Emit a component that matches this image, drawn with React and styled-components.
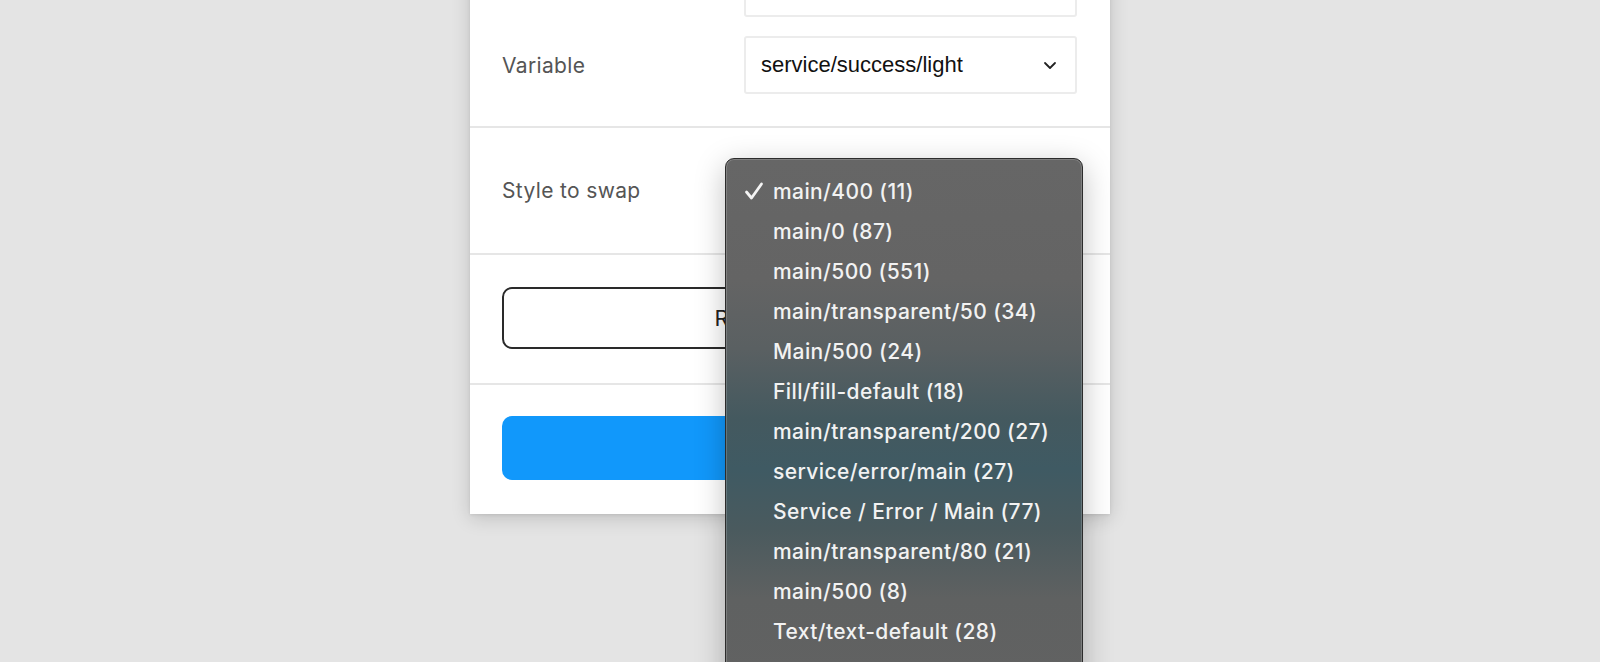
import styled, { createGlobalStyle } from 'styled-components';

const GlobalStyle = createGlobalStyle`
  html, body {
    margin: 0;
    padding: 0;
    background: #e4e4e4;
    overflow: hidden;
  }
  body {
    font-family: Inter, "Noto Sans", sans-serif;
  }
`;

const Page = styled.div`
  width: 1600px;
  height: 662px;
  overflow: hidden;
  display: flex;
  justify-content: flex-start;
  padding-left: 470px;
  box-sizing: border-box;
`;

const Panel = styled.div`
  width: 640px;
  margin-top: -73px;
  align-self: flex-start;
  background: #fff;
  box-shadow: 0 4px 18px rgba(0, 0, 0, 0.16), 0 1px 3px rgba(0, 0, 0, 0.08);
  display: flex;
  flex-direction: column;
`;

const Section = styled.div`
  padding: ${p => p.$pad || '33px 32px 34px'};
  display: flex;
  flex-direction: column;
  gap: 19px;
  border-top: ${p => (p.$first ? 'none' : '2px solid #e6e6e6')};
`;

const Row = styled.div`
  display: grid;
  grid-template-columns: 242px 333px;
  align-items: center;
  height: 58px;
`;

const Label = styled.div`
  font-size: 21px;
  color: #555;
  letter-spacing: 0.35px;
`;

const SelectBox = styled.div`
  position: relative;
  height: 58px;
  box-sizing: border-box;
  border: 2px solid #ececec;
  border-radius: 3px;
  display: flex;
  align-items: center;
  justify-content: space-between;
  padding: 0 18px 0 15px;
  font-family: "Liberation Sans", Arial, sans-serif;
  font-size: 22px;
  color: #111;
`;

const Chevron = () => (
  <svg width="14" height="9" viewBox="0 0 14 9">
    <path d="M2 2 L7 7 L12 2" fill="none" stroke="#222" strokeWidth="1.8" strokeLinecap="round" strokeLinejoin="round" />
  </svg>
);

const OutlineButton = styled.button`
  height: 62px;
  width: 100%;
  background: #fff;
  border: 2px solid #2a2a2a;
  border-radius: 10px;
  font-family: Inter, sans-serif;
  font-size: 22px;
  color: #222;
`;

const PrimaryButton = styled.button`
  height: 64px;
  width: 100%;
  background: #1198fb;
  border: none;
  border-radius: 10px;
  font-family: Inter, sans-serif;
  font-size: 22px;
  font-weight: 600;
  color: #fff;
`;

const Menu = styled.div`
  position: absolute;
  left: -21px;
  top: -5px;
  width: 358px;
  height: 540px;
  box-sizing: border-box;
  border-radius: 9px;
  border: 1px solid #2c2c2c;
  box-shadow: inset 0 0 0 1px rgba(255, 255, 255, 0.18), 0 8px 30px rgba(0, 0, 0, 0.25);
  background: linear-gradient(
    180deg,
    #666666 0px,
    #646464 120px,
    #5a6062 190px,
    #44595f 260px,
    #3f5a63 310px,
    #4a5a5e 370px,
    #5f6161 440px,
    #626262 540px
  );
  padding-top: 12px;
  display: flex;
  flex-direction: column;
  z-index: 10;
`;

const MenuItem = styled.div`
  height: 40px;
  display: flex;
  align-items: center;
  padding-left: 18px;
  gap: 9px;
  font-family: Inter, "Noto Sans", sans-serif;
  font-size: 21px;
  font-weight: 500;
  letter-spacing: 0.4px;
  color: #f2f2f2;
  white-space: nowrap;
`;

const CheckSlot = styled.span`
  width: 20px;
  display: flex;
  justify-content: center;
`;

const Check = () => (
  <svg width="20" height="18" viewBox="0 0 20 18">
    <path d="M2.5 10 L7.5 16 L17.5 2" fill="none" stroke="#f4f4f4" strokeWidth="2.8" strokeLinecap="round" strokeLinejoin="round" />
  </svg>
);

const styles = [
  'main/400 (11)',
  'main/0 (87)',
  'main/500 (551)',
  'main/transparent/50 (34)',
  'Main/500 (24)',
  'Fill/fill-default (18)',
  'main/transparent/200 (27)',
  'service/error/main (27)',
  'Service / Error / Main (77)',
  'main/transparent/80 (21)',
  'main/500 (8)',
  'Text/text-default (28)',
  'main/100 (10)',
];

export default function App() {
  return (
    <>
      <GlobalStyle />
      <Page>
        <Panel>
          <Section $first $pad="32px 32px 32px">
            <Row>
              <span />
              <SelectBox />
            </Row>
            <Row>
              <Label>Variable</Label>
              <SelectBox>
                service/success/light
                <Chevron />
              </SelectBox>
            </Row>
          </Section>
          <Section>
            <Row>
              <Label>Style to swap</Label>
              <SelectBox>
                <span />
                <Chevron />
                <Menu>
                  {styles.map((s, i) => (
                    <MenuItem key={i}>
                      <CheckSlot>{i === 0 && <Check />}</CheckSlot>
                      {s}
                    </MenuItem>
                  ))}
                </Menu>
              </SelectBox>
            </Row>
          </Section>
          <Section $pad="32px 32px 34px">
            <OutlineButton>Replace styles</OutlineButton>
          </Section>
          <Section $pad="31px 32px 34px">
            <PrimaryButton>Swap</PrimaryButton>
          </Section>
        </Panel>
      </Page>
    </>
  );
}
